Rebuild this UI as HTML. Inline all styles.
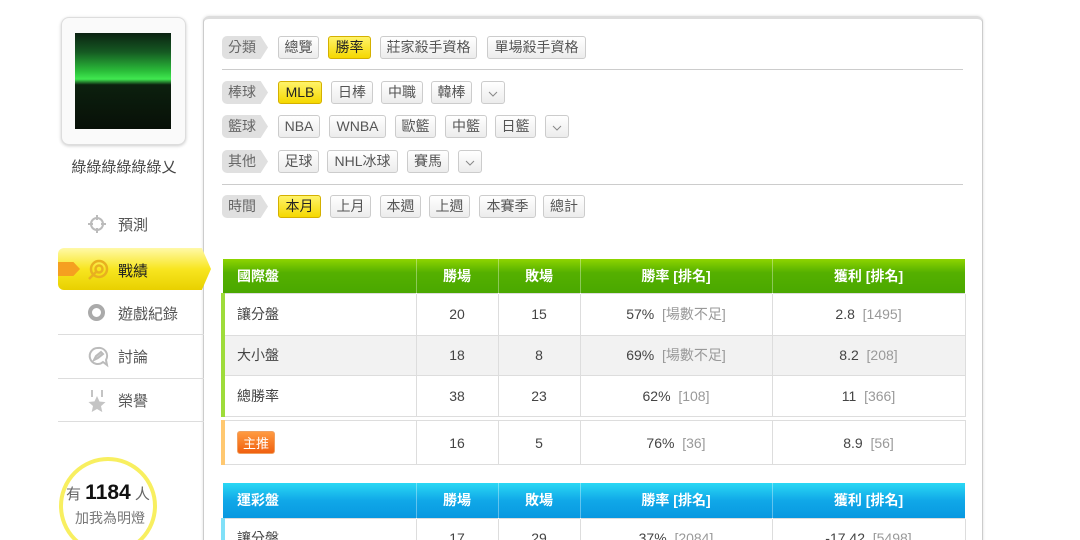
<!DOCTYPE html>
<html><head><meta charset="utf-8">
<style>
*{margin:0;padding:0;box-sizing:border-box}
html,body{width:1080px;height:540px;overflow:hidden}
body{background:#fff;font-family:"Liberation Sans","Noto Sans CJK TC",sans-serif;color:#444;position:relative}
.a{position:absolute}
.btn{position:absolute;height:23px;border:1px solid #ccc;border-radius:3px;background:linear-gradient(#fff,#ececec);font-size:14px;color:#555;text-align:center;line-height:21px}
.on{background:linear-gradient(#fff36a,#f5d800);border-color:#d4b000;color:#222}
.lab{position:absolute;left:222px;width:46px;height:23px;background:#e0e0e0;border-radius:5px 0 0 5px;font-size:14px;color:#666;line-height:23px;padding-left:6px;clip-path:polygon(0 0,84% 0,100% 50%,84% 100%,0 100%)}
.dd svg{margin-top:7px}
.hl{position:absolute;left:222px;width:741px;height:1px;background:#ccc}
table{position:absolute;left:221px;width:742px;border-collapse:collapse;font-size:14px;table-layout:fixed}
td{border:1px solid #ddd;text-align:center;color:#444}
td:first-child{text-align:left;padding-left:12px}
th{color:#fff;font-weight:bold;font-size:14px;border-right:1px solid rgba(255,255,255,.35)}
th:first-child{text-align:left;padding-left:14px}
.g{color:#999}
.mi{position:absolute;left:58px;width:146px;font-size:15px;color:#555}
</style></head><body>
<div class="a" style="left:203px;top:16px;width:780px;height:540px;border:1px solid #ccc;border-top:3px solid #ddd;border-radius:6px 6px 0 0;box-shadow:0 0 3px #ddd"></div>
<div class="a" style="left:61px;top:17px;width:125px;height:128px;border:1px solid #ddd;border-radius:8px;box-shadow:0 1px 3px #ccc;background:#fafafa"></div>
<div class="a" style="left:75px;top:33px;width:96px;height:96px;background:linear-gradient(#0b2212 0%,#155a22 20%,#2bbf3a 40%,#40e850 48%,#0c200e 54%,#081008 100%)"></div>
<div class="a" style="left:62px;top:156px;width:124px;text-align:center;font-size:15px;color:#444">綠綠綠綠綠綠乂</div>
<div class="mi" style="top:214px"><svg style="position:absolute;left:29px;top:0" width="20" height="20" viewBox="0 0 20 20" fill="none" stroke="#bbb" stroke-width="2"><circle cx="10" cy="10" r="6"/><path d="M10 1v5M10 14v5M1 10h5M14 10h5"/></svg><span style="position:absolute;left:60px">預測</span></div>
<div class="a" style="left:58px;top:248px;width:153px;height:42px;background:linear-gradient(#fff9a8,#f8e620 50%,#e8d000);clip-path:polygon(0 0,94% 0,100% 50%,94% 100%,0 100%);border-radius:6px;z-index:2"></div>
<div class="a" style="left:58px;top:262px;width:22px;height:14px;background:#f5a020;clip-path:polygon(0 0,70% 0,100% 50%,70% 100%,0 100%);z-index:3"></div>
<svg class="a" style="left:86px;top:259px;z-index:3" width="24" height="22" viewBox="0 0 24 22" fill="none" stroke="#e8b020" stroke-width="2.5"><circle cx="13" cy="10" r="8"/><circle cx="13" cy="10" r="3.5"/><path d="M11 12L3 20"/></svg>
<div class="a" style="left:118px;top:260px;font-size:15px;color:#222;z-index:3">戰績</div>
<div class="mi" style="top:303px"><span style="position:absolute;left:30px;top:1px;width:17px;height:17px;border:4px solid #aaa;border-radius:50%"></span><span style="position:absolute;left:60px">遊戲紀錄</span></div>
<div class="a" style="left:58px;top:334px;width:146px;height:1px;background:#ddd"></div>
<div class="mi" style="top:346px"><svg style="position:absolute;left:29px;top:0" width="22" height="22" viewBox="0 0 22 22" fill="none" stroke="#bbb" stroke-width="2"><path d="M11 2a8 8 0 1 0 5 14l4 3-1-5a8 8 0 0 0-8-12z"/><path d="M7 14l2-4 5-4 2 2-5 4z" fill="#ccc"/></svg><span style="position:absolute;left:60px">討論</span></div>
<div class="a" style="left:58px;top:378px;width:146px;height:1px;background:#ddd"></div>
<div class="mi" style="top:390px"><svg style="position:absolute;left:29px;top:0" width="20" height="22" viewBox="0 0 20 22" fill="#c4c4c4"><path d="M4 0h2v7H4zM14 0h2v7h-2z"/><path d="M10 6l2.5 5.5 6 .6-4.5 4 1.3 6L10 19l-5.3 3 1.3-6-4.5-4 6-.6z"/></svg><span style="position:absolute;left:60px">榮譽</span></div>
<div class="a" style="left:58px;top:421px;width:146px;height:1px;background:#ddd"></div>
<div class="a" style="left:59px;top:457px;width:98px;height:98px;border:4px solid #f8ef60;border-radius:50%"></div>
<div class="a" style="left:66px;top:481px;width:95px;font-size:15px;color:#666;white-space:nowrap">有 <b style="font-size:21px;color:#111">1184</b> 人</div>
<div class="a" style="left:75px;top:508px;font-size:14px;color:#777">加我為明燈</div>

<div class="lab" style="top:36px">分類</div>
<div class="btn" style="left:278px;top:36px;width:41px">總覽</div>
<div class="btn on" style="left:328px;top:36px;width:43px">勝率</div>
<div class="btn" style="left:380px;top:36px;width:97px">莊家殺手資格</div>
<div class="btn" style="left:487px;top:36px;width:99px">單場殺手資格</div>
<div class="hl" style="top:69px"></div>

<div class="lab" style="top:81px">棒球</div>
<div class="btn on" style="left:278px;top:81px;width:44px">MLB</div>
<div class="btn" style="left:331px;top:81px;width:42px">日棒</div>
<div class="btn" style="left:381px;top:81px;width:42px">中職</div>
<div class="btn" style="left:431px;top:81px;width:41px">韓棒</div>
<div class="btn dd" style="left:481px;top:81px;width:24px"><svg width="10" height="6" viewBox="0 0 10 6" fill="none" stroke="#888"><path d="M1 1l4 4 4-4"/></svg></div>

<div class="lab" style="top:115px">籃球</div>
<div class="btn" style="left:278px;top:115px;width:42px">NBA</div>
<div class="btn" style="left:329px;top:115px;width:57px">WNBA</div>
<div class="btn" style="left:395px;top:115px;width:41px">歐籃</div>
<div class="btn" style="left:445px;top:115px;width:42px">中籃</div>
<div class="btn" style="left:495px;top:115px;width:41px">日籃</div>
<div class="btn dd" style="left:545px;top:115px;width:24px"><svg width="10" height="6" viewBox="0 0 10 6" fill="none" stroke="#888"><path d="M1 1l4 4 4-4"/></svg></div>

<div class="lab" style="top:150px">其他</div>
<div class="btn" style="left:278px;top:150px;width:41px">足球</div>
<div class="btn" style="left:327px;top:150px;width:71px">NHL冰球</div>
<div class="btn" style="left:407px;top:150px;width:42px">賽馬</div>
<div class="btn dd" style="left:458px;top:150px;width:24px"><svg width="10" height="6" viewBox="0 0 10 6" fill="none" stroke="#888"><path d="M1 1l4 4 4-4"/></svg></div>
<div class="hl" style="top:184px"></div>

<div class="lab" style="top:195px">時間</div>
<div class="btn on" style="left:278px;top:195px;width:43px">本月</div>
<div class="btn" style="left:330px;top:195px;width:41px">上月</div>
<div class="btn" style="left:380px;top:195px;width:41px">本週</div>
<div class="btn" style="left:429px;top:195px;width:41px">上週</div>
<div class="btn" style="left:479px;top:195px;width:57px">本賽季</div>
<div class="btn" style="left:543px;top:195px;width:42px">總計</div>

<table style="top:259px">
<colgroup><col style="width:193px"><col style="width:82px"><col style="width:82px"><col style="width:192px"><col style="width:193px"></colgroup>
<tr style="height:34px;background:linear-gradient(#8ed400,#55b000 40%,#4aa800)"><th>國際盤</th><th>勝場</th><th>敗場</th><th>勝率 [排名]</th><th>獲利 [排名]</th></tr>
<tr style="height:42px"><td style="border-left:4px solid #9edc3a">讓分盤</td><td>20</td><td>15</td><td>57% &nbsp;<span class="g">[場數不足]</span></td><td>2.8 &nbsp;<span class="g">[1495]</span></td></tr>
<tr style="height:40px;background:#f2f2f2"><td style="border-left:4px solid #9edc3a">大小盤</td><td>18</td><td>8</td><td>69% &nbsp;<span class="g">[場數不足]</span></td><td>8.2 &nbsp;<span class="g">[208]</span></td></tr>
<tr style="height:41px"><td style="border-left:4px solid #9edc3a">總勝率</td><td>38</td><td>23</td><td>62% &nbsp;<span class="g">[108]</span></td><td>11 &nbsp;<span class="g">[366]</span></td></tr>
</table>
<table style="top:420px">
<colgroup><col style="width:193px"><col style="width:82px"><col style="width:82px"><col style="width:192px"><col style="width:193px"></colgroup>
<tr style="height:44px"><td style="border-left:4px solid #ffc870"><span style="display:inline-block;background:linear-gradient(#ff9a40,#f06010);color:#fff;font-size:13px;padding:1px 5px;border-radius:3px;border:1px solid #f0a060">主推</span></td><td>16</td><td>5</td><td>76% &nbsp;<span class="g">[36]</span></td><td>8.9 &nbsp;<span class="g">[56]</span></td></tr>
</table>
<table style="top:483px">
<colgroup><col style="width:193px"><col style="width:82px"><col style="width:82px"><col style="width:192px"><col style="width:193px"></colgroup>
<tr style="height:35px;background:linear-gradient(#2ad8f4,#10a8e8 50%,#0898e0)"><th>運彩盤</th><th>勝場</th><th>敗場</th><th>勝率 [排名]</th><th>獲利 [排名]</th></tr>
<tr style="height:40px"><td style="border-left:4px solid #80e0f8">讓分盤</td><td>17</td><td>29</td><td>37% &nbsp;<span class="g">[2084]</span></td><td>-17.42 &nbsp;<span class="g">[5498]</span></td></tr>
</table>
</body></html>
